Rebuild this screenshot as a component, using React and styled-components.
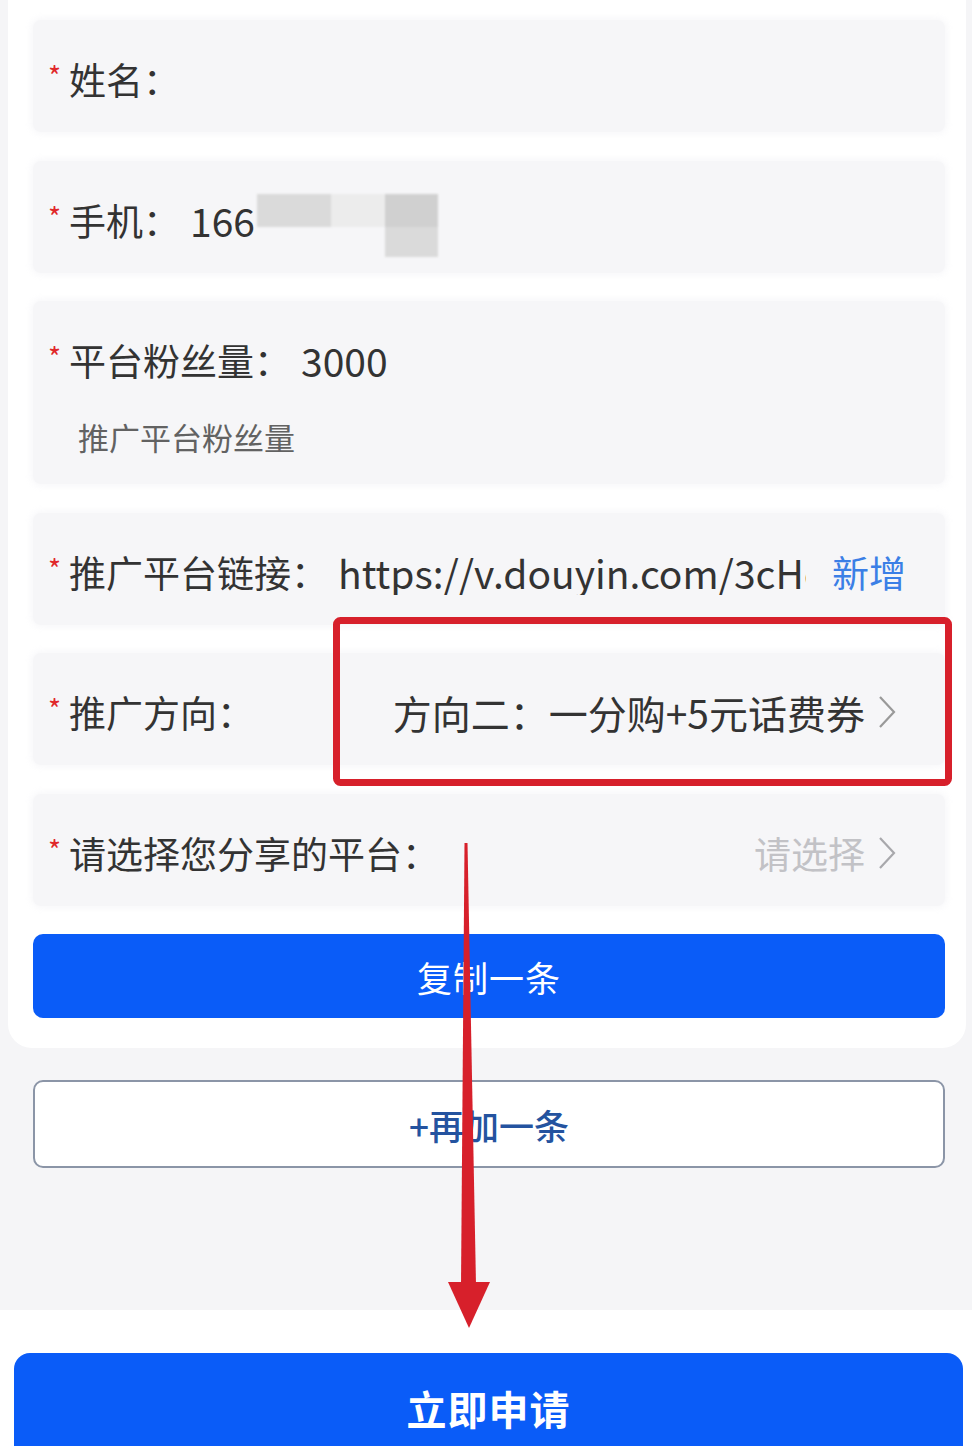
import React from 'react';
import styled, { createGlobalStyle } from 'styled-components';

const GlobalStyle = createGlobalStyle`
  html, body {
    margin: 0;
    padding: 0;
    background: #f5f5f7;
  }
  body {
    font-family: "Noto Sans CJK SC", "Noto Sans", sans-serif;
    color: #333;
    overflow: hidden;
  }
  *, *::before, *::after {
    box-sizing: border-box;
  }
`;

const blue = '#0a5cf8';

const Page = styled.div`
  position: relative;
  width: 972px;
  height: 1446px;
  overflow: hidden;
  display: flex;
  flex-direction: column;
  background: #f5f5f7;
`;

const Card = styled.div`
  margin: 0 6px 0 8px;
  padding: 20px 21px 30px 25px;
  background: #fff;
  border-radius: 0 0 24px 24px;
  display: flex;
  flex-direction: column;
  gap: 28.5px;
`;

const Field = styled.div`
  display: flex;
  flex-direction: column;
  padding: 36px 39px 30px 15px;
  background: #f6f6f8;
  border-radius: 8px;
  box-shadow: 0 0 6px 2px rgba(246, 246, 248, 0.9);
`;

const Line = styled.div`
  display: flex;
  align-items: flex-start;
  height: 46px;
`;

const Star = styled.span`
  width: 21px;
  flex: none;
  color: #e0272a;
  font-size: 28px;
  line-height: 28px;
  margin-top: 5px;
`;

const Label = styled.span`
  flex: none;
  font-size: 37px;
  line-height: 46px;
  color: #333;
`;

const Value = styled.span`
  flex: none;
  margin-left: ${(p) => (p.$right ? 'auto' : '10px')};
  font-size: ${(p) => p.$size || 39}px;
  line-height: 46px;
  color: ${(p) => (p.$muted ? '#c2c2c6' : '#333')};
  white-space: nowrap;
`;

const LinkValue = styled(Value)`
  flex: 1 1 0;
  min-width: 0;
  overflow: hidden;
`;

const Hint = styled.div`
  margin: 37px 0 0 30px;
  font-size: 31px;
  line-height: 34px;
  color: #626262;
`;

const AddLink = styled.span`
  flex: none;
  margin-left: 26px;
  font-size: 37px;
  line-height: 46px;
  color: #3b7fe6;
`;

const Chevron = styled.svg`
  flex: none;
  width: 18px;
  height: 34px;
  margin: 6px 10px 0 13px;
`;

const Redaction = styled.span`
  display: grid;
  grid-template-columns: 74px 54px 53px;
  grid-template-rows: 33px 30px;
  margin: -3px 0 -20px 2px;
  filter: blur(1px);
`;

const Blur = styled.span`
  background: ${(p) => p.$tone};
  grid-row: ${(p) => p.$row || 'auto'};
  grid-column: ${(p) => p.$col};
`;

const SolidButton = styled.button`
  height: 84px;
  border: none;
  border-radius: 10px;
  background: ${blue};
  color: #fff;
  font-family: inherit;
  font-size: 35px;
  letter-spacing: 1px;
`;

const OutlineButton = styled.button`
  margin: 32px 27px 0 33px;
  height: 88px;
  border: 2px solid #8b95a7;
  border-radius: 10px;
  background: #fff;
  color: #24539f;
  font-family: inherit;
  font-size: 35px;
  font-weight: 500;
`;

const Footer = styled.div`
  margin-top: auto;
  height: 136px;
  padding: 43px 9px 0 14px;
  background: #fff;
`;

const SubmitButton = styled.button`
  width: 100%;
  height: 110px;
  border: none;
  border-radius: 16px;
  background: ${blue};
  color: #fff;
  font-family: inherit;
  font-size: 40px;
  font-weight: 700;
  letter-spacing: 1px;
`;

const Marks = styled.svg`
  position: absolute;
  top: 0;
  left: 0;
  pointer-events: none;
`;

const Arrow = ({ color = '#999' }) => (
  <Chevron viewBox="0 0 18 34">
    <polyline points="2,2 16,17 2,32" fill="none" stroke={color} strokeWidth="2.2" />
  </Chevron>
);

const App = () => (
  <Page>
    <GlobalStyle />
    <Card>
      <Field>
        <Line>
          <Star>*</Star>
          <Label>姓名：</Label>
        </Line>
      </Field>
      <Field>
        <Line>
          <Star>*</Star>
          <Label>手机：</Label>
          <Value>166</Value>
          <Redaction>
            <Blur $col="1" $tone="#dadada" />
            <Blur $col="2" $tone="#ececec" />
            <Blur $col="3" $tone="#d0d0d0" />
            <Blur $col="3" $row="2" $tone="#dadada" />
          </Redaction>
        </Line>
      </Field>
      <Field>
        <Line>
          <Star>*</Star>
          <Label>平台粉丝量：</Label>
          <Value>3000</Value>
        </Line>
        <Hint>推广平台粉丝量</Hint>
      </Field>
      <Field>
        <Line>
          <Star>*</Star>
          <Label>推广平台链接：</Label>
          <LinkValue>https://v.douyin.com/3cHc</LinkValue>
          <AddLink>新增</AddLink>
        </Line>
      </Field>
      <Field>
        <Line>
          <Star>*</Star>
          <Label>推广方向：</Label>
          <Value $right>方向二：一分购+5元话费券</Value>
          <Arrow />
        </Line>
      </Field>
      <Field>
        <Line>
          <Star>*</Star>
          <Label>请选择您分享的平台：</Label>
          <Value $right $muted $size={37}>请选择</Value>
          <Arrow color="#a8a8ac" />
        </Line>
      </Field>
      <SolidButton>复制一条</SolidButton>
    </Card>
    <OutlineButton>+再加一条</OutlineButton>
    <Footer>
      <SubmitButton>立即申请</SubmitButton>
    </Footer>
    <Marks width="972" height="1446" viewBox="0 0 972 1446">
      <rect x="336.5" y="620.5" width="612" height="162" rx="4" fill="none" stroke="#d7202b" strokeWidth="7" />
      <polygon points="464.5,843 467.5,843 476,1285 461,1285" fill="#d7202b" />
      <polygon points="448,1282 490,1282 469,1328" fill="#d7202b" />
    </Marks>
  </Page>
);

export default App;
